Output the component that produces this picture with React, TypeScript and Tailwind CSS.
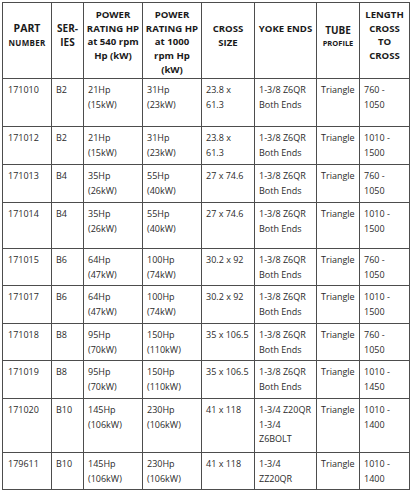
type Row = {
  part: string;
  series: string;
  hp540: string[];
  hp1000: string[];
  cross: string[];
  yoke: string[];
  tube: string;
  length: string[];
  h: string;
};

const rows: Row[] = [
  { part: "171010", series: "B2", hp540: ["21Hp", "(15kW)"], hp1000: ["31Hp", "(23kW)"], cross: ["23.8 x", "61.3"], yoke: ["1-3/8 Z6QR", "Both Ends"], tube: "Triangle", length: ["760 -", "1050"], h: "h-[48px]" },
  { part: "171012", series: "B2", hp540: ["21Hp", "(15kW)"], hp1000: ["31Hp", "(23kW)"], cross: ["23.8 x", "61.3"], yoke: ["1-3/8 Z6QR", "Both Ends"], tube: "Triangle", length: ["1010 -", "1500"], h: "h-[38px]" },
  { part: "171013", series: "B4", hp540: ["35Hp", "(26kW)"], hp1000: ["55Hp", "(40kW)"], cross: ["27 x 74.6"], yoke: ["1-3/8 Z6QR", "Both Ends"], tube: "Triangle", length: ["760 -", "1050"], h: "h-[38px]" },
  { part: "171014", series: "B4", hp540: ["35Hp", "(26kW)"], hp1000: ["55Hp", "(40kW)"], cross: ["27 x 74.6"], yoke: ["1-3/8 Z6QR", "Both Ends"], tube: "Triangle", length: ["1010 -", "1500"], h: "h-[46px]" },
  { part: "171015", series: "B6", hp540: ["64Hp", "(47kW)"], hp1000: ["100Hp", "(74kW)"], cross: ["30.2 x 92"], yoke: ["1-3/8 Z6QR", "Both Ends"], tube: "Triangle", length: ["760 -", "1050"], h: "h-[37px]" },
  { part: "171017", series: "B6", hp540: ["64Hp", "(47kW)"], hp1000: ["100Hp", "(74kW)"], cross: ["30.2 x 92"], yoke: ["1-3/8 Z6QR", "Both Ends"], tube: "Triangle", length: ["1010 -", "1500"], h: "h-[38px]" },
  { part: "171018", series: "B8", hp540: ["95Hp", "(70kW)"], hp1000: ["150Hp", "(110kW)"], cross: ["35 x 106.5"], yoke: ["1-3/8 Z6QR", "Both Ends"], tube: "Triangle", length: ["760 -", "1050"], h: "h-[37px]" },
  { part: "171019", series: "B8", hp540: ["95Hp", "(70kW)"], hp1000: ["150Hp", "(110kW)"], cross: ["35 x 106.5"], yoke: ["1-3/8 Z6QR", "Both Ends"], tube: "Triangle", length: ["1010 -", "1450"], h: "h-[38px]" },
  { part: "171020", series: "B10", hp540: ["145Hp", "(106kW)"], hp1000: ["230Hp", "(106kW)"], cross: ["41 x 118"], yoke: ["1-3/4 Z20QR", "1-3/4", "Z6BOLT"], tube: "Triangle", length: ["1010 -", "1400"], h: "h-[54px]" },
  { part: "179611", series: "B10", hp540: ["145Hp", "(106kW)"], hp1000: ["230Hp", "(106kW)"], cross: ["41 x 118"], yoke: ["1-3/4", "ZZ20QR"], tube: "Triangle", length: ["1010 -", "1400"], h: "h-[37px]" },
];

const grid = "grid grid-cols-[49px_32px_59px_59px_53px_62px_43px_50px]";

function Cell({ lines, first }: { lines: string[]; first?: boolean }) {
  return (
    <div className={`border-r border-[#4d4d4d] pt-[4px] ${first ? "pl-[5px]" : "pl-[4px]"}`}>
      {lines.map((l, i) => (
        <div key={i} className="whitespace-nowrap">
          {l}
        </div>
      ))}
    </div>
  );
}

function Head({ children, top }: { children: React.ReactNode; top?: boolean }) {
  return (
    <div
      className={`border-r border-[#4d4d4d] flex flex-col items-center text-center ${top ? "pt-[5px]" : "pt-[19px]"}`}
    >
      {children}
    </div>
  );
}

export default function App() {
  return (
    <div className="w-[416px] h-[493px] bg-white font-['Open_Sans',sans-serif]">
      <div className="ml-[2px] pt-[2px]">
        <div className="w-[408px] border-l border-t border-[#4d4d4d]">
          <div className={`${grid} h-[76px] border-b border-[#4d4d4d] text-[9.6px] leading-[13.7px] font-bold text-[#1a1a1a]`}>
            <Head>
              <span className="text-[10.5px]">PART</span>
              <span className="text-[8px] tracking-[0.3px]">NUMBER</span>
            </Head>
            <Head>
              <span className="text-[10px]">SER-</span>
              <span className="text-[10px]">IES</span>
            </Head>
            <Head top>
              <span>POWER</span>
              <span className="whitespace-nowrap">RATING HP</span>
              <span className="whitespace-nowrap">at 540 rpm</span>
              <span>Hp (kW)</span>
            </Head>
            <Head top>
              <span>POWER</span>
              <span className="whitespace-nowrap">RATING HP</span>
              <span>at 1000</span>
              <span>rpm Hp</span>
              <span>(kW)</span>
            </Head>
            <Head>
              <span>CROSS</span>
              <span>SIZE</span>
            </Head>
            <Head>
              <span className="whitespace-nowrap">YOKE ENDS</span>
            </Head>
            <Head>
              <span className="mt-[2px] text-[10px]">TUBE</span>
              <span className="text-[7.5px] leading-[11px]">PROFILE</span>
            </Head>
            <Head top>
              <span>LENGTH</span>
              <span>CROSS</span>
              <span>TO</span>
              <span>CROSS</span>
            </Head>
          </div>
          {rows.map((r) => (
            <div
              key={r.part}
              className={`${grid} ${r.h} border-b border-[#4d4d4d] text-[9px] leading-[14.5px] text-[#2b2b2b]`}
            >
              <Cell lines={[r.part]} first />
              <Cell lines={[r.series]} />
              <Cell lines={r.hp540} />
              <Cell lines={r.hp1000} />
              <Cell lines={r.cross} />
              <Cell lines={r.yoke} />
              <Cell lines={[r.tube]} />
              <Cell lines={r.length} />
            </div>
          ))}
        </div>
      </div>
    </div>
  );
}
